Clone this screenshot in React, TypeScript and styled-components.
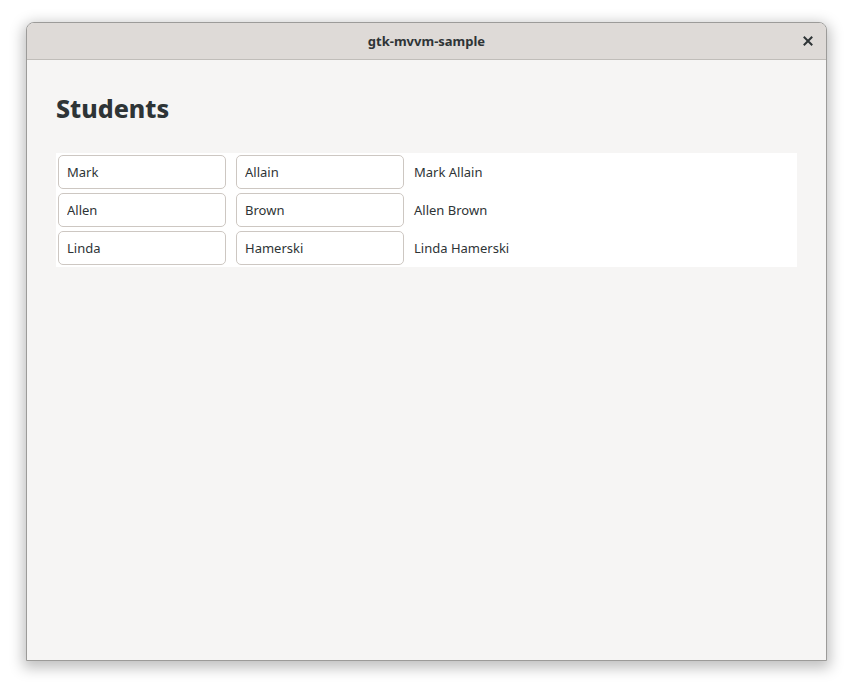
import React from 'react';
import styled, { createGlobalStyle } from 'styled-components';

const students = [
  { first: 'Mark', last: 'Allain' },
  { first: 'Allen', last: 'Brown' },
  { first: 'Linda', last: 'Hamerski' },
];

const GlobalStyle = createGlobalStyle`
  html, body {
    margin: 0;
    padding: 0;
    background: #ffffff;
  }
  body {
    font-family: 'Noto Sans', 'DejaVu Sans', sans-serif;
    color: #2e3436;
  }
`;

export default function App() {
  return (
    <>
      <GlobalStyle />
      <Desktop>
        <Window>
          <HeaderBar>
            <span />
            <Title>gtk-mvvm-sample</Title>
            <CloseButton aria-label="Close">
              <svg width="10" height="10" viewBox="0 0 10 10">
                <path d="M1.5 1.5 L8.5 8.5 M8.5 1.5 L1.5 8.5" stroke="#2e3436" strokeWidth="2" strokeLinecap="square" />
              </svg>
            </CloseButton>
          </HeaderBar>
          <Content>
            <Heading>Students</Heading>
            <StudentList>
              {students.map((s) => (
                <StudentRow key={s.first}>
                  <Entry defaultValue={s.first} />
                  <Entry defaultValue={s.last} />
                  <FullName>{s.first} {s.last}</FullName>
                </StudentRow>
              ))}
            </StudentList>
          </Content>
        </Window>
      </Desktop>
    </>
  );
}

/* ─── STYLED COMPONENTS ─── */
const Desktop = styled.div`
  width: 852px;
  height: 689px;
  padding: 22px 0 0 26px;
  box-sizing: border-box;
`;

const Window = styled.div`
  width: 801px;
  height: 639px;
  box-sizing: border-box;
  border: 1px solid #9c9b99;
  border-radius: 8px 8px 0 0;
  background: #f6f5f4;
  box-shadow: 0 4px 14px 3px rgba(0, 0, 0, 0.25);
  overflow: hidden;
  display: flex;
  flex-direction: column;
`;

const HeaderBar = styled.div`
  height: 37px;
  flex-shrink: 0;
  box-sizing: border-box;
  background: #dedad7;
  border-bottom: 1px solid #c0bdb9;
  display: grid;
  grid-template-columns: 1fr auto 1fr;
  align-items: center;
`;

const Title = styled.div`
  font-size: 13px;
  font-weight: 700;
  color: #2e3436;
`;

const CloseButton = styled.button`
  justify-self: end;
  margin-right: 10px;
  width: 16px;
  height: 16px;
  padding: 0;
  border: none;
  background: transparent;
  display: flex;
  align-items: center;
  justify-content: center;
  cursor: pointer;
`;

const Content = styled.div`
  padding: 30px 29px 0;
`;

const Heading = styled.h1`
  margin: 0 0 27px;
  font-size: 25px;
  line-height: 36px;
  font-weight: 800;
  color: #2e3436;
`;

const StudentList = styled.div`
  background: #ffffff;
  padding: 2px;
  display: flex;
  flex-direction: column;
  gap: 4px;
`;

const StudentRow = styled.div`
  display: flex;
  align-items: center;
  gap: 10px;
`;

const Entry = styled.input`
  width: 168px;
  height: 34px;
  box-sizing: border-box;
  padding: 0 8px;
  border: 1px solid #cdc7c2;
  border-radius: 5px;
  background: #ffffff;
  font-family: 'Noto Sans', 'DejaVu Sans', sans-serif;
  font-size: 13px;
  color: #2e3436;
  outline: none;
`;

const FullName = styled.span`
  font-size: 13px;
  color: #2e3436;
`;
